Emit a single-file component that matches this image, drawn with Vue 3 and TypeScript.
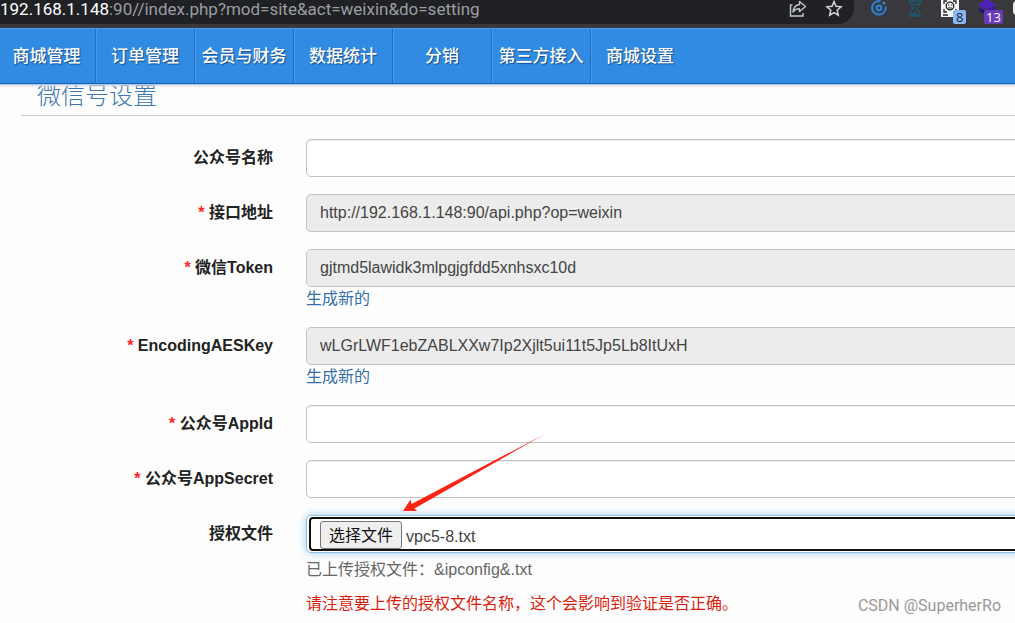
<script setup lang="ts">
import { ref } from 'vue'

interface Field {
  id: string
  label: string
  required: boolean
  value: string
  readonly: boolean
  regenerate: boolean
}

const menu: string[] = ['商城管理', '订单管理', '会员与财务', '数据统计', '分销', '第三方接入', '商城设置']

const fields = ref<Field[]>([
  { id: 'name', label: '公众号名称', required: false, value: '', readonly: false, regenerate: false },
  { id: 'api', label: '接口地址', required: true, value: 'http://192.168.1.148:90/api.php?op=weixin', readonly: true, regenerate: false },
  { id: 'token', label: '微信Token', required: true, value: 'gjtmd5lawidk3mlpgjgfdd5xnhsxc10d', readonly: true, regenerate: true },
  { id: 'aes', label: 'EncodingAESKey', required: true, value: 'wLGrLWF1ebZABLXXw7Ip2Xjlt5ui11t5Jp5Lb8ItUxH', readonly: true, regenerate: true },
  { id: 'appid', label: '公众号AppId', required: true, value: '', readonly: false, regenerate: false },
  { id: 'secret', label: '公众号AppSecret', required: true, value: '', readonly: false, regenerate: false },
])

const fileName = ref('vpc5-8.txt')
const picker = ref<HTMLInputElement | null>(null)

function onPick(e: Event): void {
  const file = (e.target as HTMLInputElement).files?.[0]
  if (file) fileName.value = file.name
}
</script>

<template>
  <div class="page">
    <header class="browser">
      <div class="address">
        <span class="url"><b>192.168.1.148</b>:90//index.php?mod=site&amp;act=weixin&amp;do=setting</span>
        <button type="button" class="tool" aria-label="Share">
          <svg width="20" height="20" viewBox="0 0 20 20" fill="none" stroke="#c4c7ca" stroke-width="1.4">
            <path d="M4.500 5H2.500v11h12.500V13" />
            <path d="M11.500 1.500l6 5-6 5V8.700C8.500 8.600 6.500 9.800 5 12c.4-4 2.500-7 6.500-7.500z" stroke-linejoin="round" />
          </svg>
        </button>
        <button type="button" class="tool" aria-label="Bookmark">
          <svg width="20" height="20" viewBox="0 0 20 20" fill="none" stroke="#d2d4d6" stroke-width="1.500">
            <path d="M10 1.600l2 4.700 5 .5-3.800 3.400 1.100 5L10 12.600 5.700 15.200l1.100-5L3 6.800l5-.5z" />
          </svg>
        </button>
      </div>
      <div class="extensions">
        <svg width="20" height="20" viewBox="0 0 20 20" fill="none">
          <path d="M11.500 1.200A6.800 6.800 0 1 0 16.600 6.500" stroke="#2f7fd8" stroke-width="2" />
          <circle cx="10" cy="8" r="2.300" stroke="#2f7fd8" stroke-width="2.200" />
          <circle cx="15" cy="3" r="1.600" fill="#2f7fd8" />
        </svg>
        <svg width="20" height="20" viewBox="0 0 20 20" fill="none" stroke="#20566f" stroke-width="1.300">
          <path d="M3 1h14M3 16h14M5 1c0 4 1 5 4 7-3 2-4 4-4 8M15 1c0 4-1 5-4 7 3 2 4 4 4 8M5 4.500h10" />
          <path d="M10 11l4 4.500H6z" fill="#20566f" stroke="none" />
        </svg>
        <span class="ext">
          <svg width="18" height="18" viewBox="0 0 18 18">
            <path d="M0 0h18v17H0z" fill="#f5f5f5" />
            <path d="M3 4V1h3M12 1h3v3M3 9v3h3M15 9v3h-3M2 15h5" fill="none" stroke="#222" stroke-width="1.300" />
            <circle cx="9" cy="6" r="3.800" fill="none" stroke="#222" stroke-width="1.300" />
            <path d="M7 5h1.500M10 5h1.500M7 8h4" stroke="#222" stroke-width="1.200" />
          </svg>
          <i class="badge blue">8</i>
        </span>
        <span class="ext">
          <svg width="18" height="18" viewBox="0 0 18 18">
            <path d="M0 5l9-6 9 6-9 5z" fill="#5020bd" />
            <path d="M1 8l8 3v5L1 11z" fill="#26107c" />
            <path d="M9 10l8-4v5l-8 5z" fill="#3a16a0" />
          </svg>
          <i class="badge purple">13</i>
        </span>
        <span class="avatar"></span>
      </div>
    </header>

    <nav class="menu">
      <a v-for="item in menu" :key="item" href="#">{{ item }}</a>
    </nav>

    <main>
      <h1>微信号设置</h1>
      <form @submit.prevent>
        <div v-for="f in fields" :key="f.id" class="row">
          <label :for="f.id"><em v-if="f.required">* </em>{{ f.label }}</label>
          <div class="field">
            <input :id="f.id" v-model="f.value" type="text" :readonly="f.readonly" />
            <a v-if="f.regenerate" href="#" class="regen">生成新的</a>
          </div>
        </div>
        <div class="row">
          <label for="license">授权文件</label>
          <div class="field">
            <div class="upload">
              <div class="ring">
                <input id="license" ref="picker" type="file" class="native" @change="onPick" />
                <button type="button" @click="picker?.click()">选择文件</button>
                <span>{{ fileName }}</span>
              </div>
              <svg class="arrow" width="146" height="82" viewBox="0 0 146 82" aria-hidden="true">
                <path d="M1 78L8.500 66.500 9.500 71 143 1 12.500 75.500 15 78z" fill="#fb2415" />
              </svg>
            </div>
            <p class="help">已上传授权文件：&amp;ipconfig&amp;.txt</p>
            <p class="warn">请注意要上传的授权文件名称，这个会影响到验证是否正确。</p>
          </div>
        </div>
      </form>
    </main>
    <div class="credit">CSDN @SuperherRo</div>
  </div>
</template>

<style>
body {
  margin: 0;
  background: #fdfdfd;
}
</style>

<style scoped>
.page {
  position: relative;
  min-height: 100vh;
  overflow: hidden;
  color: #222;
  font: 16px/22px "Liberation Sans", "Noto Sans CJK SC", sans-serif;
}
.browser {
  display: flex;
  height: 28px;
  background: #39393d;
  box-sizing: border-box;
  padding-bottom: 4px;
}
.address {
  flex: 1;
  display: flex;
  align-items: flex-start;
  gap: 16px;
  padding-right: 10px;
  background: #202124;
  border-bottom-right-radius: 16px;
}
.url {
  flex: 1;
  color: #9b9ea2;
  font: 17px/18px Roboto, sans-serif;
  white-space: nowrap;
}
.url b {
  color: #fff;
  font-weight: 400;
}
.tool {
  width: 20px;
  height: 20px;
  padding: 0;
  border: 0;
  background: none;
}
.tool svg {
  display: block;
}
.extensions {
  display: flex;
  gap: 16px;
  padding-left: 15px;
}
.ext {
  position: relative;
  width: 21px;
}
.badge {
  position: absolute;
  left: 12px;
  top: 10px;
  padding: 0 3px;
  border-radius: 2px;
  font: 13px/14px "Open Sans", sans-serif;
}
.blue {
  background: #8ab8f4;
  color: #16243c;
}
.purple {
  left: 6px;
  padding: 0 2px;
  background: #6a3bb5;
  color: #fff;
}
.avatar {
  width: 10px;
  height: 16px;
  margin-left: -2px;
  margin-right: -8px;
  border-radius: 8px;
  background: #eee;
}
.menu {
  position: relative;
  display: flex;
  height: 56px;
  box-sizing: border-box;
  background: #318be2;
  border-top: 1px solid #4a9cec;
  border-bottom: 1px solid #1261b4;
  box-shadow: 0 1px #a9cdf0, 0 2px 2px #d5d5d5;
}
.menu a {
  width: 99px;
  box-sizing: border-box;
  border-right: 1px solid #1e70c4;
  box-shadow: 1px 0 #4898e6;
  color: #fff;
  font-size: 17px;
  font-weight: 500;
  line-height: 56px;
  text-align: center;
  text-decoration: none;
  text-shadow: 1px 1px 1px #174f8c;
  white-space: nowrap;
}
.menu a:first-child {
  width: 96px;
  padding-right: 2px;
}
.menu a:last-child {
  border-right-color: transparent;
  box-shadow: none;
}
h1 {
  margin: 0 0 23px 21px;
  padding: 0 0 7px 16px;
  border-bottom: 1px solid #ccc;
  color: #3f78b0;
  font-size: 24px;
  font-weight: 300;
  line-height: 24px;
}
.row {
  display: grid;
  grid-template-columns: 273px 1fr;
  column-gap: 33px;
  margin-bottom: 17px;
}
.row:last-child {
  margin-bottom: 0;
}
.row > label {
  font-weight: 700;
  line-height: 38px;
  text-align: right;
}
em {
  color: #f22;
  font-style: normal;
  font-weight: 700;
}
.field {
  margin-right: -10px;
}
input[type="text"] {
  display: block;
  width: 100%;
  height: 38px;
  box-sizing: border-box;
  padding: 0 13px;
  border: 1px solid #c2c2c2;
  border-radius: 5px;
  background: #fff;
  color: #444;
  font: inherit;
  box-shadow: inset 0 1px 1px #eee;
}
input[readonly] {
  background: #ececec;
}
.regen {
  display: block;
  height: 23px;
  color: #3670a8;
  line-height: 23px;
  text-decoration: none;
}
.upload {
  position: relative;
  height: 38px;
  box-sizing: border-box;
  padding: 1px 2px;
  border: 1px solid #8fc0ea;
  border-radius: 5px;
  box-shadow: 0 0 8px #9fcdf3;
  background: #fff;
}
.ring {
  display: flex;
  align-items: flex-end;
  gap: 4px;
  height: 34px;
  box-sizing: border-box;
  padding-left: 9px;
  border: 2px solid #101010;
  border-radius: 4px;
  color: #444;
  line-height: 24px;
}
.ring button {
  height: 28px;
  padding: 2px 8px 0;
  border: 1px solid #777;
  border-radius: 3px;
  background: #efefef;
  color: #111;
  font: inherit;
  line-height: 24px;
}
.native {
  position: absolute;
  width: 1px;
  height: 1px;
  opacity: 0;
}
.arrow {
  position: absolute;
  left: 95px;
  top: -83px;
}
p {
  margin: 0;
}
.help {
  margin-top: 6px;
  color: #666;
}
.warn {
  margin-top: 12px;
  color: #d81e10;
}
.credit {
  position: absolute;
  right: 14px;
  bottom: 8px;
  color: #999;
  font: 16px/18px Roboto, sans-serif;
}
</style>
